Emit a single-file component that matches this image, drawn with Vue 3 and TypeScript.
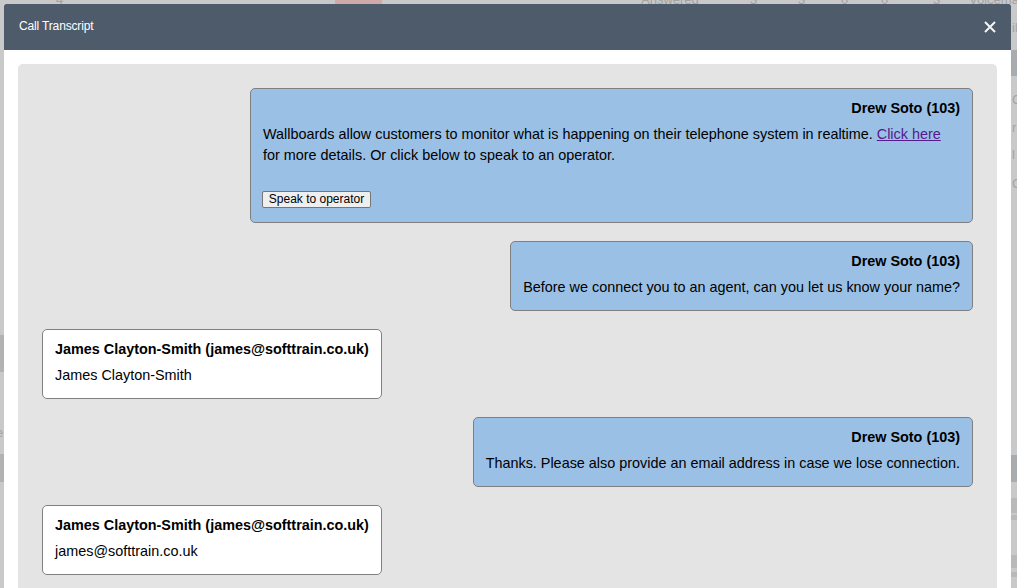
<script setup lang="ts">
interface Message {
  id: number
  agent: boolean
  author: string
  text: string
}

interface Ghost {
  id: number
  left: number
  top: number
  width: number
  height: number
  color: string
}

interface GhostText {
  id: number
  left: number
  top: number
  label: string
}

const messages: Message[] = [
  { id: 2, agent: true, author: 'Drew Soto (103)', text: 'Before we connect you to an agent, can you let us know your name?' },
  { id: 3, agent: false, author: 'James Clayton-Smith (james@softtrain.co.uk)', text: 'James Clayton-Smith' },
  { id: 4, agent: true, author: 'Drew Soto (103)', text: 'Thanks. Please also provide an email address in case we lose connection.' },
  { id: 5, agent: false, author: 'James Clayton-Smith (james@softtrain.co.uk)', text: 'james@softtrain.co.uk' },
]

const ghosts: Ghost[] = [
  { id: 1, left: 335, top: 0, width: 47, height: 4, color: '#d2a9a9' },
  { id: 2, left: 0, top: 335, width: 4, height: 37, color: '#b0b2b4' },
  { id: 3, left: 0, top: 454, width: 4, height: 28, color: '#b0b2b4' },
  { id: 4, left: 1011, top: 50, width: 6, height: 26, color: '#a9acae' },
  { id: 5, left: 1011, top: 455, width: 6, height: 27, color: '#a9acae' },
  { id: 6, left: 1011, top: 498, width: 6, height: 15, color: '#b9b9b9' },
  { id: 7, left: 1011, top: 515, width: 6, height: 5, color: '#b9b9b9' },
  { id: 8, left: 1011, top: 555, width: 6, height: 13, color: '#b9b9b9' },
  { id: 9, left: 1011, top: 572, width: 6, height: 5, color: '#b9b9b9' },
]

const ghostTexts: GhostText[] = [
  { id: 1, left: 56, top: -8, label: '4' },
  { id: 2, left: 641, top: -8, label: 'Answered' },
  { id: 3, left: 750, top: -8, label: '3' },
  { id: 4, left: 798, top: -8, label: '3' },
  { id: 5, left: 841, top: -8, label: '0' },
  { id: 6, left: 881, top: -8, label: '0' },
  { id: 7, left: 933, top: -8, label: '3' },
  { id: 8, left: 969, top: -8, label: 'Voicemail' },
  { id: 9, left: 1012, top: 20, label: 'il' },
  { id: 10, left: 1012, top: 92, label: 'C' },
  { id: 11, left: 1012, top: 120, label: 'r' },
  { id: 12, left: 1012, top: 147, label: 'l' },
  { id: 13, left: 1012, top: 176, label: 'C' },
  { id: 14, left: -4, top: 425, label: 'e' },
]

function ghostStyle(g: Ghost) {
  return {
    left: `${g.left}px`,
    top: `${g.top}px`,
    width: `${g.width}px`,
    height: `${g.height}px`,
    background: g.color,
  }
}

function textStyle(t: GhostText) {
  return { left: `${t.left}px`, top: `${t.top}px` }
}
</script>

<template>
  <div class="page">
    <div class="backdrop" aria-hidden="true">
      <span v-for="g in ghosts" :key="g.id" class="ghost" :style="ghostStyle(g)"></span>
      <span v-for="t in ghostTexts" :key="t.id" class="ghost-text" :style="textStyle(t)">{{ t.label }}</span>
    </div>
    <section class="modal">
      <header class="modal-head">
        <h1 class="modal-title">Call Transcript</h1>
        <button class="close" type="button" aria-label="Close">
          <svg width="12" height="12" viewBox="0 0 12 12"><path d="M1 1 11 11M11 1 1 11" stroke="#f4f5f6" stroke-width="2" fill="none" /></svg>
        </button>
      </header>
      <div class="modal-body">
        <div class="panel">
          <article class="bubble agent first">
            <div class="author">Drew Soto (103)</div>
            <p class="text">Wallboards allow customers to monitor what is happening on their telephone system in realtime. <a href="#" class="link">Click here</a> for more details. Or click below to speak to an operator.</p>
            <button class="op" type="button">Speak to operator</button>
          </article>
          <article v-for="m in messages" :key="m.id" class="bubble" :class="m.agent ? 'agent' : 'user'">
            <div class="author">{{ m.author }}</div>
            <p class="text">{{ m.text }}</p>
          </article>
        </div>
      </div>
    </section>
  </div>
</template>

<style>
html, body { margin: 0; height: 100%; overflow: hidden; background: #c9c9c9; }
</style>

<style scoped>
.page {
  position: relative;
  height: 588px;
  overflow: hidden;
  box-sizing: border-box;
  padding: 4px 6px 0 4px;
  font-family: "Liberation Sans", Arial, sans-serif;
  color: #000;
}
.backdrop { position: absolute; inset: 0; }
.ghost { position: absolute; }
.ghost-text { position: absolute; font-size: 13px; line-height: 15px; color: #a3a3a3; }
.modal { position: relative; background: #fff; height: 700px; }
.modal-head {
  box-sizing: border-box;
  height: 46px;
  background: #4e5b6b;
  display: flex;
  align-items: center;
  justify-content: space-between;
  padding: 0 15px 2px 15px;
  border-radius: 2px 2px 0 0;
}
.modal-title { margin: 0; font-size: 12px; font-weight: 400; color: #fff; letter-spacing: -0.15px; }
.close { background: none; border: 0; padding: 2px 0 0; display: flex; }
.modal-body { padding: 14px 14px 0; }
.panel {
  background: #e4e4e4;
  border-radius: 5px;
  padding: 24px;
  display: flex;
  flex-direction: column;
  align-items: flex-start;
  gap: 18px;
}
.bubble {
  box-sizing: border-box;
  border: 1px solid #808080;
  border-radius: 5px;
  padding: 9px 12px 11px;
  font-size: 14.4px;
  line-height: 21.6px;
  min-height: 70px;
}
.bubble.agent { background: #9bc0e6; align-self: flex-end; }
.bubble.user { background: #fff; }
.bubble.agent .author { text-align: right; }
.bubble.first { width: 723px; height: 135px; }
.author { font-weight: 700; margin-bottom: 4px; }
.text { margin: 0; }
.link { color: #551a8b; }
.op {
  display: block;
  margin: 24px 0 0 -1px;
  height: 17px;
  width: 109px;
  padding: 0;
  font: 12px "Liberation Sans", Arial, sans-serif;
  background: #efefef;
  border: 1px solid #767676;
  border-radius: 2px;
  color: #000;
}
</style>
